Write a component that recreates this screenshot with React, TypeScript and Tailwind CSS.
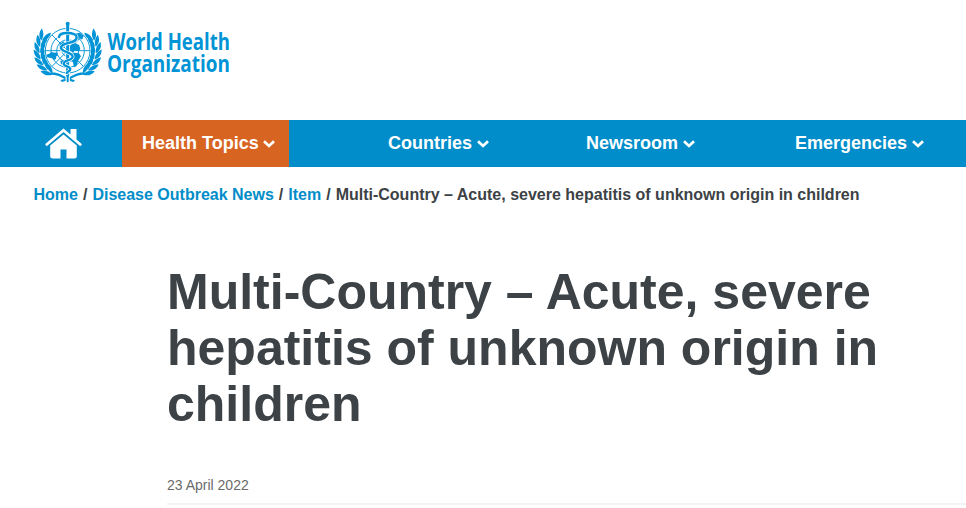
import clsx from 'clsx';

const navItems = [
    { label: 'Health Topics', className: 'w-[167px] pl-5 bg-[#d86422]' },
    { label: 'Countries', className: 'w-[248px] pl-[99px]' },
    { label: 'Newsroom', className: 'w-[208px] pl-[49px]' },
    { label: 'Emergencies', className: 'flex-1 pl-[50px]' },
];

const crumbs = ['Home', 'Disease Outbreak News', 'Item'];

const title = 'Multi-Country – Acute, severe hepatitis of unknown origin in children';

const leafAngles = [-45, -32, -19, -6, 7, 20, 33];

const serpent =
    'M105 75 C106 66 116 63 128 63 C143 63 158 65 158 76 C158 90 139 91 126 95 C112 99 108 106 113 112 C120 121 145 122 146 134 C147 145 119 144 119 155 C119 164 139 162 139 171 C139 178 130 178 128 183';

function Branch() {
    return (
        <g>
            {leafAngles.map((angle) => (
                <g key={angle} transform={`translate(131 116) rotate(${angle}) translate(-84 0)`}>
                    <path d="M1 18 C-13 12 -19 0 -17 -14 C-7 -7 1 1 1 18Z" />
                    <path d="M3 17 C0 1 4 -10 13 -18 C18 -5 13 8 3 17Z" />
                </g>
            ))}
            <path d="M63 190 C76 179 95 180 109 187 C124 194 136 201 153 205 L148 210 C130 206 117 198 104 192 C90 187 77 187 63 190Z" />
        </g>
    );
}

function Emblem() {
    return (
        <svg viewBox="27 27 210 186" className="w-[70px] h-[62px]" fill="#0093d5">
            {/* Globe grid */}
            <g fill="none" stroke="#0093d5" strokeWidth="2.8">
                <circle cx="131" cy="116" r="67" />
                <circle cx="131" cy="116" r="50" />
                <circle cx="131" cy="116" r="33" />
                <circle cx="131" cy="116" r="17" />
                <path d="M64 116H198M84 69L178 163M84 163L178 69" />
            </g>
            {/* Continents */}
            <path d="M67 128 L76 125 L82 120 L92 122 L98 121 L102 130 L97 133 L96 141 L90 144 L84 139 L70 136Z" />
            <path d="M137 104 L145 94 L156 96 L165 98 L169 111 L164 118 L153 115 L146 121 L139 116Z" />
            <path d="M141 127 L151 122 L165 124 L171 133 L162 147 L157 163 L150 166 L147 151 L142 146Z" />
            <path d="M108 96 L118 88 L122 92 L112 100 L113 107 L105 106Z" />
            <path d="M156 64 L168 62 L179 72 L174 83 L166 77 L163 85 L159 79Z" />
            <path d="M109 146 L122 143 L119 156 L111 157Z" />
            <Branch />
            <g transform="translate(262 0) scale(-1 1)">
                <Branch />
            </g>
            {/* Rod and serpent */}
            <g fill="none" strokeLinecap="round">
                <path d="M131 35V209" stroke="#fff" strokeWidth="13" />
                <path d="M131 38V190" stroke="#0093d5" strokeWidth="9" />
                <path d="M131 188V208" stroke="#0093d5" strokeWidth="6" />
                <path d={serpent} stroke="#fff" strokeWidth="11" />
                <path d={serpent} stroke="#0093d5" strokeWidth="7" />
            </g>
            <circle cx="131" cy="35" r="6" />
        </svg>
    );
}

function HomeIcon() {
    return (
        <svg viewBox="0 0 37 31" className="w-[37px] h-[31px]" fill="#fff">
            <path d="M18.5 0.5 L25.5 6.5 V1 H31.5 V11.5 L37 16.3 L35.3 18.3 L18.5 4.1 L1.7 18.3 L0 16.3Z" />
            <path d="M18.5 6.4 L31.8 17.6 V28 Q31.8 30.5 29.3 30.5 H21.5 V21.5 H15.5 V30.5 H7.7 Q5.2 30.5 5.2 28 V17.6Z" />
        </svg>
    );
}

function Chevron() {
    return (
        <svg viewBox="0 0 12 8" className="w-3 h-2 mt-0.5" fill="none" stroke="#fff" strokeWidth="2.7">
            <path d="M1 1.2 L6 6 L11 1.2" />
        </svg>
    );
}

export default function App() {
    return (
        <div className="w-[966px] h-[508px] overflow-hidden bg-white font-['Liberation_Sans',Arial,sans-serif] text-[#3c4245]">
            <header className="h-[120px] pl-[33px] pt-[21px] flex items-start">
                <Emblem />
                <svg
                    viewBox="0 0 126 66"
                    className="w-[126px] h-[66px] ml-1 overflow-visible font-['Open_Sans','Noto_Sans',sans-serif] font-bold"
                    fill="#0093d5"
                    fontSize="23"
                >
                    <text x="0.5" y="29" textLength="122.5" lengthAdjust="spacingAndGlyphs">World Health</text>
                    <text x="0" y="50.5" textLength="123" lengthAdjust="spacingAndGlyphs">Organization</text>
                </svg>
            </header>

            <nav className="h-[47px] flex bg-[#008dc9] text-white text-[18px] font-bold">
                <a href="#" className="w-[122px] pl-[45px] flex items-center">
                    <HomeIcon />
                </a>
                {navItems.map((item) => (
                    <a
                        key={item.label}
                        href="#"
                        className={clsx('flex items-center gap-[4.5px] pb-px whitespace-nowrap', item.className)}
                    >
                        {item.label}
                        <Chevron />
                    </a>
                ))}
            </nav>

            <div className="pl-[33.5px] pt-4 flex gap-[5px] text-base leading-6 font-bold whitespace-nowrap">
                {crumbs.map((crumb) => (
                    <span key={crumb} className="flex gap-[5px]">
                        <a href="#" className="text-[#008dc9]">{crumb}</a>
                        <span>/</span>
                    </span>
                ))}
                <span>{title}</span>
            </div>

            <main className="ml-[167px] mt-[57px]">
                <h1 className="w-[760px] text-[50px] leading-[56px] font-bold">{title}</h1>
                <p className="h-[71px] pt-[43px] text-sm leading-5 text-[#6b6b6b]">23 April 2022</p>
                <div className="h-0.5 bg-[#f3f3f3]" />
            </main>
        </div>
    );
}
